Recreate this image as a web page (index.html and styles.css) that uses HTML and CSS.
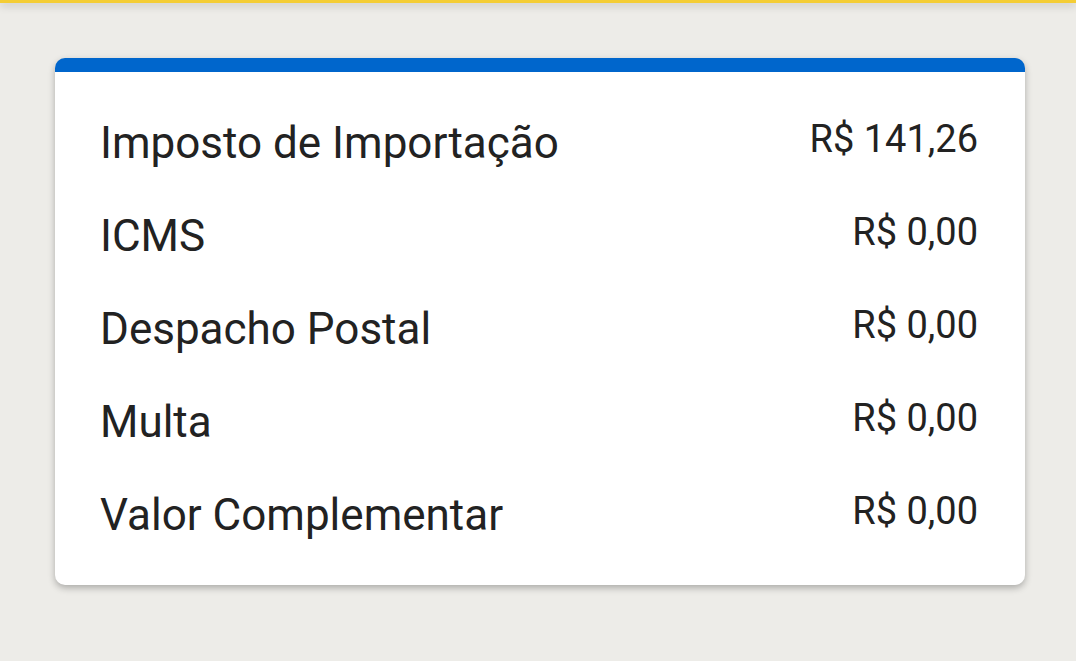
FILE: index.html
```html
<!DOCTYPE html>
<html lang="pt-BR">
<head>
<meta charset="utf-8">
<link rel="stylesheet" href="styles.css">
</head>
<body>
<div class="topbar"></div>
<main class="page">
  <section class="card">
    <div class="row"><span class="label">Imposto de Importação</span><span class="value">R$ 141,26</span></div>
    <div class="row"><span class="label">ICMS</span><span class="value">R$ 0,00</span></div>
    <div class="row"><span class="label">Despacho Postal</span><span class="value">R$ 0,00</span></div>
    <div class="row"><span class="label">Multa</span><span class="value">R$ 0,00</span></div>
    <div class="row"><span class="label">Valor Complementar</span><span class="value">R$ 0,00</span></div>
  </section>
</main>
</body>
</html>
```
FILE: styles.css
```css
html, body {
  margin: 0;
  padding: 0;
}
body {
  background: #edece8;
  font-family: Roboto, "Noto Sans", sans-serif;
  color: #222222;
  width: 1076px;
  height: 661px;
  overflow: hidden;
}
.topbar {
  height: 3px;
  background: #f4cd35;
  box-shadow: 0 2px 8px rgba(0, 0, 0, 0.28);
  position: relative;
  z-index: 1;
}
.page {
  padding: 55px 51px 0 55px;
}
.card {
  background: #fff;
  border-top: 14px solid #0066cc;
  border-radius: 10px;
  box-shadow: 0 3px 7px rgba(0, 0, 0, 0.28);
  padding: 25px 47px 23px 45px;
}
.row {
  display: flex;
  justify-content: space-between;
  align-items: flex-start;
  height: 93px;
}
.label {
  font-size: 44px;
  line-height: 93px;
}
.value {
  font-size: 38px;
  line-height: 84px;
}
```
